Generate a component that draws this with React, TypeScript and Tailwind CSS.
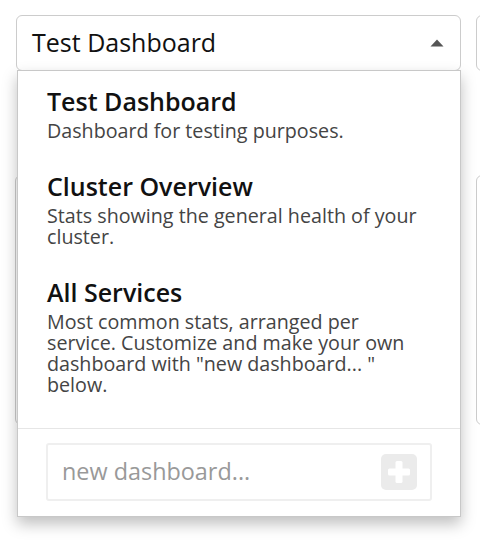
import React from 'react';

const dashboards = [
  { name: 'Test Dashboard', desc: 'Dashboard for testing purposes.' },
  { name: 'Cluster Overview', desc: 'Stats showing the general health of your cluster.' },
  {
    name: 'All Services',
    desc: 'Most common stats, arranged per service. Customize and make your own dashboard with "new dashboard... " below.',
  },
];

function Caret() {
  return (
    <svg width="14" height="8" viewBox="0 0 14 8" className="shrink-0">
      <path d="M7 0.5 L13.5 7.5 L0.5 7.5 Z" fill="#555" />
    </svg>
  );
}

function PlusButton() {
  return (
    <div className="w-[36px] h-[36px] rounded-[5px] bg-[#ebebeb] flex items-center justify-center shrink-0">
      <svg width="24" height="24" viewBox="0 0 24 24">
        <rect x="8.5" y="1" width="7" height="22" rx="1.5" fill="#fff" />
        <rect x="1" y="8.5" width="22" height="7" rx="1.5" fill="#fff" />
      </svg>
    </div>
  );
}

export default function App() {
  return (
    <div className="w-[480px] h-[549px] overflow-hidden bg-white font-['Open_Sans',sans-serif]">
      <div className="grid grid-cols-[445px_445px] gap-x-[15px] pt-[15px] pl-[16px]">
        {/* dashboard picker */}
        <div className="relative">
          <div className="h-[56px] border border-[#cccccc] rounded-[6px] bg-white flex items-center justify-between pl-[15px] pr-[16px]">
            <span className="text-[25px] text-[#111]">Test Dashboard</span>
            <Caret />
          </div>

          {/* open menu */}
          <div className="absolute z-10 top-[55px] left-px right-0 bg-white border border-[#c8c8c8] shadow-[0_7px_14px_rgba(0,0,0,0.25)]">
            <div className="pb-[18px]">
              {dashboards.map((d) => (
                <div key={d.name} className="pt-[15px] pb-[15px] pl-[29px] pr-[36px]">
                  <div className="text-[25px] leading-[30px] font-semibold text-[#111]">{d.name}</div>
                  <div className="mt-[4px] text-[19.7px] leading-[21px] text-[#444]">{d.desc}</div>
                </div>
              ))}
            </div>
            <div className="border-t border-[#e6e6e6] px-[28px] pt-[14px] pb-[15px]">
              <div className="h-[58px] border-2 border-[#efefef] rounded-[3px] flex items-center justify-between pl-[14px] pr-[13px]">
                <span className="text-[23.4px] text-[#999]">new dashboard...</span>
                <PlusButton />
              </div>
            </div>
          </div>
        </div>

        <div className="h-[56px] border border-[#cccccc] rounded-[6px] bg-white" />

        {/* panels behind the menu */}
        <div className="mt-[104px] -ml-px h-[250px] border border-[#cccccc] rounded-[6px]" />
        <div className="mt-[104px] h-[250px] border border-[#cccccc] rounded-[6px]" />
      </div>
    </div>
  );
}
